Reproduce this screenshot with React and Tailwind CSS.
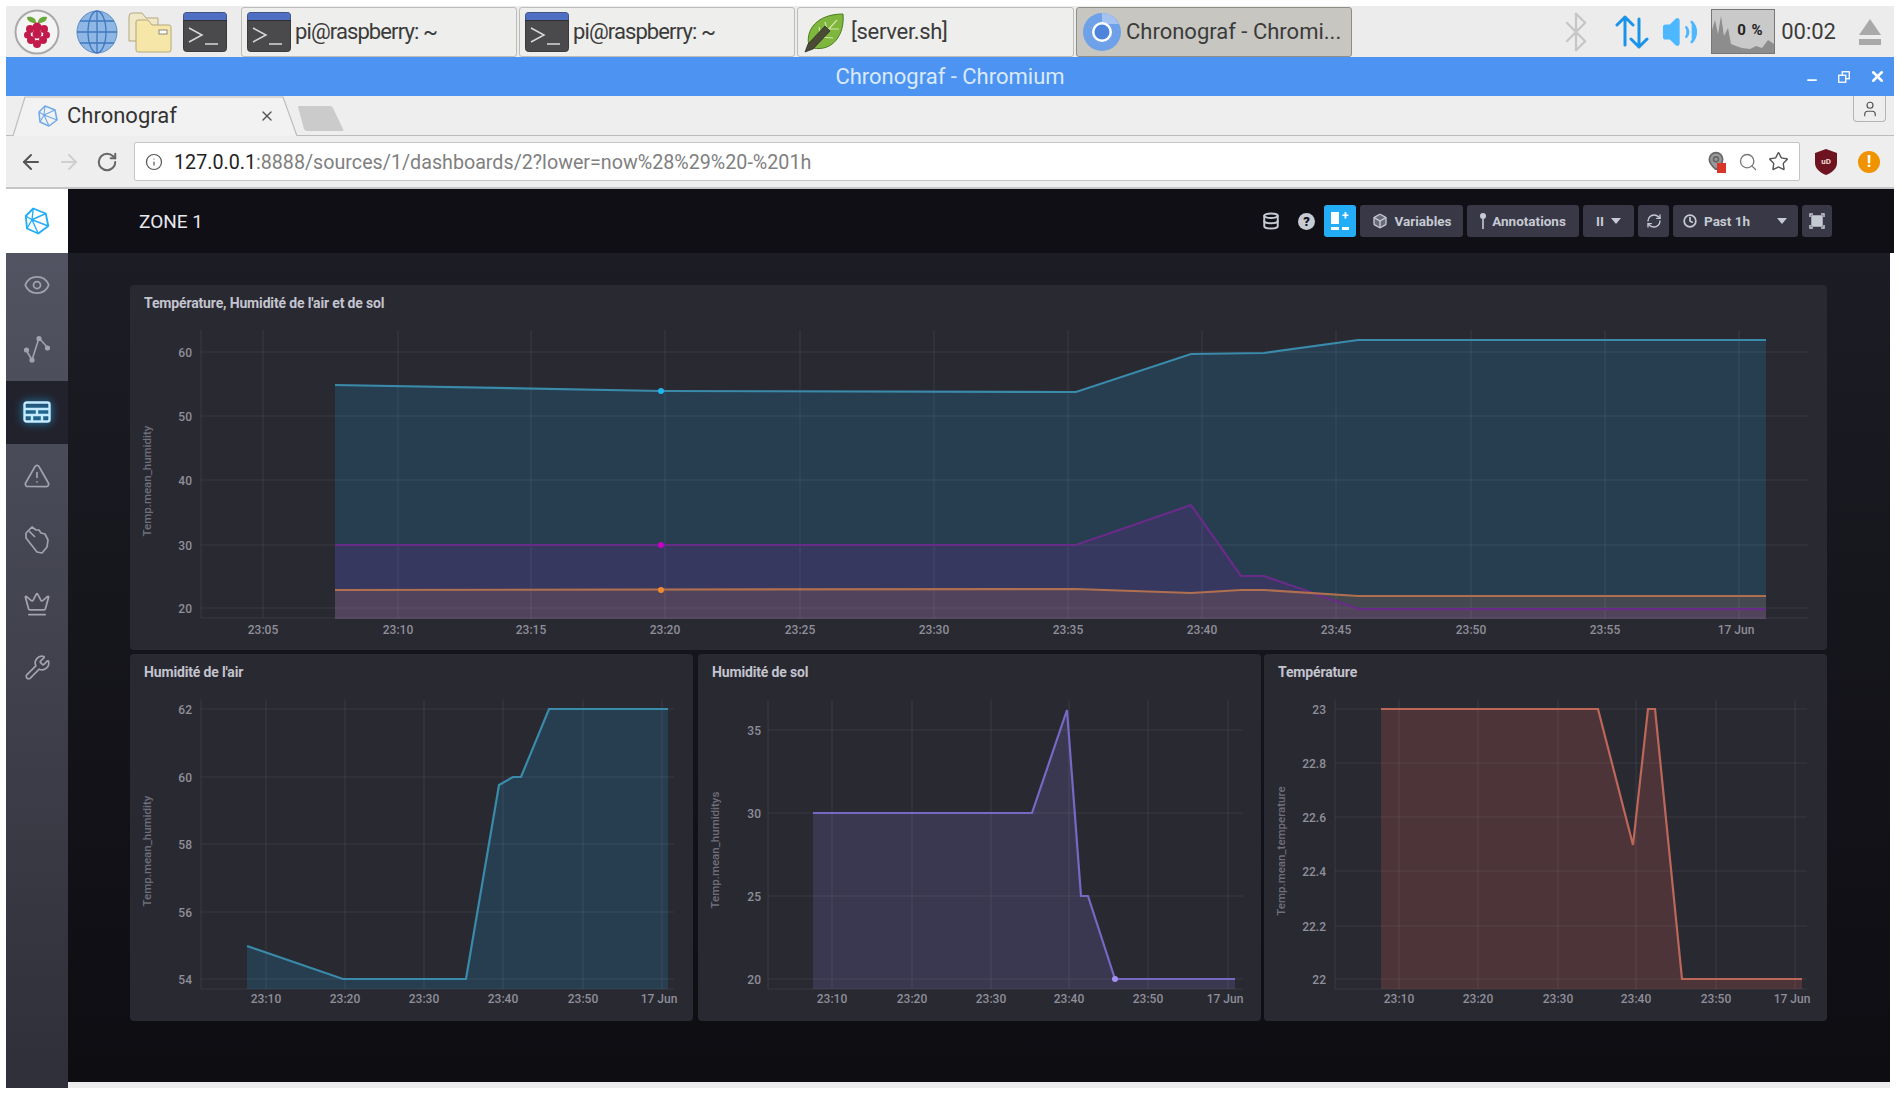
import React from 'react';
import { ArrowLeft, ArrowRight, RotateCw, Info, Search, Star, Eye, TriangleAlert, Crown, Wrench, Database, RefreshCw, Clock, Box, MapPin, User, X, Minus, Bluetooth, Volume2 } from 'lucide-react';

// chart data, all coordinates are page pixels
const blueLine = [[335, 385], [661, 391], [1076, 392], [1191, 354], [1264, 353], [1358, 340], [1766, 340]];
const purpleLine = [[335, 545], [1076, 545], [1191, 505], [1241, 576], [1264, 576], [1359, 609], [1766, 609]];
const orangeLine = [[335, 590], [1076, 589], [1191, 593], [1241, 590], [1264, 590], [1358, 596], [1766, 596]];

const charts = {
  all: {
    title: "Température, Humidité de l'air et de sol",
    box: [130, 285, 1697, 365],
    axis: { left: 201, right: 1808, top: 330, bottom: 618 },
    xTicks: [[263, '23:05'], [398, '23:10'], [531, '23:15'], [665, '23:20'], [800, '23:25'], [934, '23:30'], [1068, '23:35'], [1202, '23:40'], [1336, '23:45'], [1471, '23:50'], [1605, '23:55'], [1739, '17 Jun', 1736]],
    yTicks: [[352, '60'], [416, '50'], [480, '40'], [545, '30'], [608, '20']],
    yLabel: 'Temp.mean_humidity',
    yLabelPos: [147, 481],
    labelRight: 192,
    xLabelY: 630,
    floor: 619,
    series: [
      { points: blueLine, fill: '#22adf6', fillOpacity: 0.16, stroke: '#3a8aaa' },
      { points: purpleLine, fill: '#951eb3', fillOpacity: 0.15, stroke: '#682c88' },
      { points: orangeLine, fill: '#ee8351', fillOpacity: 0.15, stroke: '#b0704f' },
    ],
    dots: [[661, 391, '#1fb6ec'], [661, 545, '#c400c8'], [661, 590, '#f08a30']],
  },
  air: {
    title: "Humidité de l'air",
    box: [130, 654, 563, 367],
    axis: { left: 201, right: 674, top: 700, bottom: 989 },
    xTicks: [[266, '23:10'], [345, '23:20'], [424, '23:30'], [503, '23:40'], [583, '23:50'], [662, '17 Jun', 659]],
    yTicks: [[709, '62'], [777, '60'], [844, '58'], [912, '56'], [979, '54']],
    yLabel: 'Temp.mean_humidity',
    yLabelPos: [147, 851],
    labelRight: 192,
    xLabelY: 999,
    floor: 989,
    series: [{ points: [[247, 946], [343, 979], [466, 979], [499, 785], [513, 777], [521, 777], [549, 709], [668, 709]], fill: '#22adf6', fillOpacity: 0.16, stroke: '#3a8aaa' }],
    dots: [],
  },
  soil: {
    title: 'Humidité de sol',
    box: [698, 654, 563, 367],
    axis: { left: 768, right: 1243, top: 700, bottom: 989 },
    xTicks: [[832, '23:10'], [912, '23:20'], [991, '23:30'], [1069, '23:40'], [1148, '23:50'], [1228, '17 Jun', 1225]],
    yTicks: [[730, '35'], [813, '30'], [896, '25'], [979, '20']],
    yLabel: 'Temp.mean_humiditys',
    yLabelPos: [715, 850],
    labelRight: 761,
    xLabelY: 999,
    floor: 989,
    series: [{ points: [[813, 813], [1032, 813], [1067, 710], [1081, 896], [1088, 896], [1115, 979], [1235, 979]], fill: '#8e82e8', fillOpacity: 0.17, stroke: '#7768c4' }],
    dots: [[1115, 979, '#a48ff5']],
  },
  temp: {
    title: 'Température',
    box: [1264, 654, 563, 367],
    axis: { left: 1335, right: 1807, top: 700, bottom: 989 },
    xTicks: [[1399, '23:10'], [1478, '23:20'], [1558, '23:30'], [1636, '23:40'], [1716, '23:50'], [1795, '17 Jun', 1792]],
    yTicks: [[709, '23'], [763, '22.8'], [817, '22.6'], [871, '22.4'], [926, '22.2'], [979, '22']],
    yLabel: 'Temp.mean_temperature',
    yLabelPos: [1281, 851],
    labelRight: 1326,
    xLabelY: 999,
    floor: 989,
    series: [{ points: [[1381, 709], [1598, 709], [1633, 845], [1648, 709], [1655, 709], [1682, 979], [1802, 979]], fill: '#dd6555', fillOpacity: 0.2, stroke: '#bd675b' }],
    dots: [],
  },
};

const toPoints = (pts) => pts.map((p) => p.join(',')).join(' ');

function Chart({ data, className }) {
  const [x, y, w, h] = data.box;
  const { left, right, top, bottom } = data.axis;
  const titleH = 36;
  return (
    <section className={`rounded bg-[#292932] ${className}`}>
      <div className="h-[36px] pl-[14px] flex items-center text-[14px] font-bold tracking-[-0.15px] text-[#c3c4ce]">{data.title}</div>
      <svg width={w} height={h - titleH} viewBox={`${x} ${y + titleH} ${w} ${h - titleH}`} className="block">
        {data.series.map((s, i) => (
          <polygon key={i} points={`${s.points[0][0]},${data.floor} ${toPoints(s.points)} ${s.points[s.points.length - 1][0]},${data.floor}`} fill={s.fill} fillOpacity={s.fillOpacity} />
        ))}
        <g stroke="#ffffff" strokeOpacity="0.07" strokeWidth="1.2">
          {data.xTicks.map(([tx]) => <line key={tx} x1={tx} x2={tx} y1={top} y2={bottom} />)}
          {data.yTicks.map(([ty]) => <line key={ty} x1={left} x2={right} y1={ty} y2={ty} />)}
          <line x1={left} x2={left} y1={top} y2={bottom} />
          <line x1={left} x2={right} y1={bottom} y2={bottom} />
        </g>
        {data.series.map((s, i) => (
          <polyline key={i} points={toPoints(s.points)} fill="none" stroke={s.stroke} strokeWidth="2.2" />
        ))}
        {data.dots.map(([cx, cy, c]) => <circle key={c} cx={cx} cy={cy} r="3" fill={c} />)}
        <g fontFamily="Roboto, sans-serif" fontSize="12" fontWeight="500" fill="#8f8f99">
          {data.xTicks.map(([tx, label, lx = tx]) => <text key={tx} x={lx} y={data.xLabelY + 4} textAnchor="middle">{label}</text>)}
          {data.yTicks.map(([ty, label]) => <text key={ty} x={data.labelRight} y={ty + 5} textAnchor="end">{label}</text>)}
        </g>
        <text
          transform={`rotate(-90 ${data.yLabelPos[0]} ${data.yLabelPos[1]})`}
          x={data.yLabelPos[0]}
          y={data.yLabelPos[1] + 4}
          textAnchor="middle"
          fontFamily="Roboto, sans-serif"
          fontSize="11.5"
          fontWeight="500"
          fill="#6f6f7a"
        >
          {data.yLabel}
        </text>
      </svg>
    </section>
  );
}

function ChronografLogo({ size = 30, color = '#22adf6', className }) {
  return (
    <svg width={size} height={size} viewBox="0 0 24 24" fill="none" stroke={color} strokeWidth="1.5" strokeLinejoin="round" className={className}>
      <path d="M9 2 L19 6 L21 16 L13 22 L4 18 L3 8 Z" />
      <path d="M9 2 L8 11 L3 8 M8 11 L19 6 M8 11 L13 22 M8 11 L21 16 M4 18 L8 11" strokeWidth="1.1" />
    </svg>
  );
}

function Raspberry() {
  return (
    <svg width="46" height="46" viewBox="0 0 46 46">
      <circle cx="23" cy="23" r="21.5" fill="#f4f4f4" stroke="#a9a9a9" strokeWidth="2" />
      <path d="M22 14 C17 14 13 12 13 8 C18 7 22 9 22 14 Z" fill="#6aa83a" />
      <path d="M24 14 C29 14 33 12 33 8 C28 7 24 9 24 14 Z" fill="#6aa83a" />
      <g fill="#c21a4a">
        <circle cx="23" cy="18" r="4.5" />
        <circle cx="16" cy="20" r="4" />
        <circle cx="30" cy="20" r="4" />
        <circle cx="13.5" cy="26" r="3.5" />
        <circle cx="32.5" cy="26" r="3.5" />
        <circle cx="23" cy="25" r="4.5" />
        <circle cx="17" cy="31" r="4" />
        <circle cx="29" cy="31" r="4" />
        <circle cx="23" cy="35" r="4" />
      </g>
    </svg>
  );
}

function GlobeIcon() {
  return (
    <svg width="42" height="44" viewBox="0 0 42 44">
      <ellipse cx="21" cy="22" rx="20" ry="21" fill="#8fb7e6" stroke="#5c8dc8" />
      <g stroke="#3f78bd" strokeWidth="1.3" fill="none">
        <ellipse cx="21" cy="22" rx="9" ry="21" />
        <line x1="21" y1="1" x2="21" y2="43" />
        <line x1="1" y1="22" x2="41" y2="22" />
        <path d="M4 11 H38 M4 33 H38" />
      </g>
    </svg>
  );
}

function FolderIcon() {
  return (
    <svg width="44" height="42" viewBox="0 0 44 42">
      <path d="M1 6 Q1 2 4 2 H14 L18 7 H30 V30 H1 Z" fill="#f0e8c8" stroke="#b3a77a" />
      <path d="M8 11 Q8 9 10 9 H20 L24 14 H41 Q43 14 43 16 V39 Q43 41 41 41 H10 Q8 41 8 39 Z" fill="#f6e7a8" stroke="#b3a77a" />
      <rect x="31" y="19" width="8" height="4" fill="#fff" stroke="#8a8a7a" />
    </svg>
  );
}

function TerminalIcon({ size = 44 }) {
  return (
    <svg width={size} height={size - 4} viewBox="0 0 44 40" preserveAspectRatio="none">
      <rect x="0.5" y="0.5" width="43" height="39" rx="3" fill="#4a4a4c" stroke="#3a3a3c" />
      <path d="M0.5 8 V3.5 Q0.5 0.5 3.5 0.5 H40.5 Q43.5 0.5 43.5 3.5 V8 Z" fill="#4e6fc4" />
      <path d="M0.5 8 H43.5 V9 H0.5 Z" fill="#2e2e30" />
      <path d="M6 16 L19 23 L6 30" fill="none" stroke="#d8d8d8" strokeWidth="1.5" />
      <path d="M22 32 H35" stroke="#d8d8d8" strokeWidth="1.5" />
    </svg>
  );
}

function LeafpadIcon() {
  return (
    <svg width="44" height="44" viewBox="0 0 44 44">
      <path d="M6 36 C2 20 14 4 40 4 C42 24 30 42 10 38 Z" fill="#7fb63d" stroke="#4e7d1e" />
      <path d="M12 34 L34 10 M18 27 L16 17 M24 20 L22 12 M18 27 L30 28 M25 19 L36 19" stroke="#cfe6a4" strokeWidth="1.2" fill="none" />
      <path d="M2 42 L5 34 L22 16 L27 21 L10 39 Z" fill="#4b4b35" stroke="#222" strokeWidth="0.7" />
    </svg>
  );
}

function ChromiumIcon() {
  return (
    <svg width="40" height="40" viewBox="0 0 40 40">
      <circle cx="20" cy="20" r="19" fill="#6fa1e8" />
      <path d="M20 1 A19 19 0 0 1 37 12 H20 Z" fill="#a4c3f0" />
      <circle cx="20" cy="20" r="10" fill="#fff" />
      <circle cx="20" cy="20" r="7.5" fill="#4d84dc" />
    </svg>
  );
}

function NetworkIcon({ className }) {
  return (
    <svg width="34" height="36" viewBox="0 0 34 36" fill="none" stroke="#1a93e8" strokeWidth="3" strokeLinecap="round" strokeLinejoin="round" className={className}>
      <path d="M10 31 V3 M2 11 L10 3 L18 11" />
      <path d="M24 5 V33 M16 25 L24 33 L32 25" />
    </svg>
  );
}

function TaskButton({ icon, label, active, className, textClass = '' }) {
  return (
    <div className={`h-[50px] shrink-0 rounded-[3px] border flex items-center gap-[4px] pl-[5px] ${active ? 'border-[#8f8d86] bg-[#c8c6c1]' : 'border-[#bdbcb8] bg-[#eeeeec]'} ${className}`}>
      {icon}
      <span className={`text-[22px] leading-none text-[#3b3b3b] whitespace-nowrap ${textClass}`}>{label}</span>
    </div>
  );
}

function Taskbar() {
  return (
    <div className="h-[51px] bg-[#edecec] flex items-center">
      <div className="ml-[8px] w-[46px] flex justify-center"><Raspberry /></div>
      <div className="ml-[16px]"><GlobeIcon /></div>
      <div className="ml-[10px]"><FolderIcon /></div>
      <div className="ml-[11px]"><TerminalIcon /></div>
      <div className="ml-[14px] flex gap-[2px]">
        <TaskButton className="w-[276px]" textClass="tracking-[-0.9px]" icon={<TerminalIcon />} label="pi@raspberry: ~" />
        <TaskButton className="w-[276px]" textClass="tracking-[-0.9px]" icon={<TerminalIcon />} label="pi@raspberry: ~" />
        <TaskButton className="w-[277px]" textClass="tracking-[-0.3px]" icon={<LeafpadIcon />} label="[server.sh]" />
        <TaskButton active className="w-[276px]" icon={<ChromiumIcon />} label="Chronograf - Chromi..." />
      </div>
      <div className="flex-1" />
      <Bluetooth size={44} strokeWidth={1.2} className="text-[#c6c6c6] mr-[17px]" />
      <NetworkIcon className="mr-[12px]" />
      <Volume2 size={38} strokeWidth={1.6} className="text-[#4db8ff] fill-[#4db8ff] mr-[12px]" />
      <div className="relative w-[64px] h-[45px] border border-[#777] bg-[#c9c9c9]">
        <svg width="62" height="43" viewBox="0 0 62 43" className="absolute inset-0">
          <path d="M0 43 V20 L3 10 L6 24 L9 6 L12 26 L16 18 L19 34 L24 36 L30 38 L38 39 L44 36 L50 38 L56 30 L62 34 V43 Z" fill="#8d8d8d" />
        </svg>
        <span className="absolute left-[25px] top-[13px] text-[15px] tracking-[1px] leading-none font-bold text-[#222] whitespace-nowrap">0 %</span>
      </div>
      <span className="ml-[6px] text-[22px] leading-none text-[#3b3b3b]">00:02</span>
      <svg width="22" height="26" viewBox="0 0 22 26" className="ml-[23px] mr-[13px]">
        <path d="M11 0 L22 16 H0 Z M0 20 H22 V26 H0 Z" fill="#a9a9a9" />
      </svg>
    </div>
  );
}

function TitleBar() {
  return (
    <div className="relative h-[39px] bg-[#4d94f2] flex items-center justify-center">
      <span className="text-[22px] leading-none text-[#dbe9fc]">Chronograf - Chromium</span>
      <div className="absolute right-[8px] top-0 h-full flex items-center gap-[18px] text-white">
        <Minus size={14} strokeWidth={3} className="mt-[6px]" />
        <svg width="14" height="14" viewBox="0 0 16 16" fill="none" stroke="#fff" strokeWidth="1.5">
          <rect x="6" y="2" width="8" height="8" />
          <rect x="2" y="6" width="8" height="8" fill="#4d94f2" />
        </svg>
        <X size={17} strokeWidth={3.5} />
      </div>
    </div>
  );
}

function TabStrip() {
  return (
    <div className="relative h-[40px] bg-[#eeeeee] border-b border-[#bcbcbc] flex items-end">
      <div className="relative w-[292px] h-[39px] ml-[7px] shrink-0">
        <svg width="292" height="40" viewBox="0 0 292 40" className="absolute inset-0">
          <path d="M0 40 L12 1 H270 L284 40" fill="#f2f2f2" stroke="#bdbdbd" strokeWidth="1.2" />
          <rect x="1" y="39" width="282" height="2" fill="#f2f2f2" />
        </svg>
        <div className="relative h-full flex items-center pl-[23px]">
          <ChronografLogo size={24} color="#6fa8ea" />
          <span className="ml-[7px] text-[22px] leading-none text-[#333]">Chronograf</span>
          <X size={16} strokeWidth={2} className="ml-[82px] text-[#555]" />
        </div>
      </div>
      <svg width="48" height="26" viewBox="0 0 48 26" className="mb-[4px] -ml-[8px]">
        <path d="M1 2 Q1 1 2 1 H33 Q35 1 36 3 L46 24 Q47 26 45 26 H10 Q8 26 7 24 Z" fill="#cbcbcb" />
      </svg>
      <div className="absolute right-[8px] top-0 w-[33px] h-[26px] border border-t-0 border-[#b5b5b5] rounded-b-[4px] flex items-center justify-center">
        <User size={18} strokeWidth={1.6} className="text-[#555]" />
      </div>
    </div>
  );
}

function AddressBar() {
  return (
    <div className="h-[53px] bg-[#eeeeee] border-b-2 border-[#c5c5c5] flex items-center">
      <ArrowLeft size={24} strokeWidth={2} className="ml-[13px] text-[#555]" />
      <ArrowRight size={24} strokeWidth={2} className="ml-[14px] text-[#cfcfcf]" />
      <RotateCw size={22} strokeWidth={2.2} className="ml-[15px] text-[#666]" />
      <div className="ml-[16px] w-[1666px] h-[39px] bg-white border border-[#c4c4c4] rounded-[2px] flex items-center">
        <Info size={18} strokeWidth={1.6} className="ml-[10px] text-[#555]" />
        <span className="ml-[11px] mt-[2px] text-[19.7px] leading-none whitespace-nowrap">
          <span className="text-[#222]">127.0.0.1</span>
          <span className="text-[#808080]">:8888/sources/1/dashboards/2?lower=now%28%29%20-%201h</span>
        </span>
        <div className="flex-1" />
        <div className="relative mr-[12px] w-[20px] h-[22px]">
          <MapPin size={20} strokeWidth={2} className="text-[#666] fill-[#999]" />
          <span className="absolute right-0 bottom-0 w-[9px] h-[10px] bg-[#d9362b]" />
        </div>
        <Search size={20} strokeWidth={1.6} className="text-[#777] mr-[10px]" />
        <Star size={21} strokeWidth={1.6} className="text-[#555] mr-[10px]" />
      </div>
      <svg width="22" height="26" viewBox="0 0 22 26" className="ml-[15px]">
        <path d="M11 0 L22 4 V14 C22 20 16 24 11 26 C6 24 0 20 0 14 V4 Z" fill="#6d1420" />
        <text x="11" y="15" textAnchor="middle" fontSize="8" fontWeight="700" fill="#f3d9d9" fontFamily="Roboto, sans-serif">uD</text>
      </svg>
      <div className="ml-[21px] w-[22px] h-[22px] rounded-full bg-[#f09300] flex items-center justify-center text-white text-[17px] font-bold leading-none">!</div>
    </div>
  );
}

function GraphIcon() {
  return (
    <svg width="26" height="28" viewBox="0 0 26 28" fill="none" stroke="#a2a3ae" strokeWidth="1.6">
      <path d="M2 15 L8 25 L15 3 L24 13" />
      <circle cx="2.5" cy="15" r="1.8" fill="#a2a3ae" />
      <circle cx="8" cy="25" r="1.8" fill="#a2a3ae" />
      <circle cx="15" cy="3.5" r="1.8" fill="#a2a3ae" />
      <circle cx="23.5" cy="13" r="1.8" fill="#a2a3ae" />
    </svg>
  );
}

function DashIcon() {
  return (
    <svg width="28" height="22" viewBox="0 0 28 22" fill="none" stroke="#c4ebff" strokeWidth="2.4" className="drop-shadow-[0_0_4px_#22adf6]">
      <rect x="1.5" y="1.5" width="25" height="19" rx="2" />
      <path d="M1.5 8 H26.5 M14 8 V14 M1.5 14 H26.5 M9 14 V20 M19 14 V20" />
    </svg>
  );
}

function HandIcon() {
  return (
    <svg width="28" height="30" viewBox="0 0 28 30" fill="none" stroke="#a2a3ae" strokeWidth="1.7" strokeLinejoin="round">
      <path d="M3 8 L9 2 L13 5 L16 5 L18 8 L22 9 L25 15 L24 22 L19 28 L14 27 L3 13 Z" />
      <path d="M6 6 L12 12" />
    </svg>
  );
}

function Caret({ className }) {
  return (
    <svg width="10" height="6" viewBox="0 0 10 6" className={className}>
      <path d="M0 0 H10 L5 6 Z" fill="#c6cad3" />
    </svg>
  );
}

function Sidebar() {
  const cell = 'h-[63.8px] flex items-center justify-center';
  return (
    <div className="w-[62px] h-[899px] shrink-0 flex flex-col bg-gradient-to-b from-[#565766] to-[#2e2f38]">
      <div className="h-[64px] bg-white flex items-center justify-center shrink-0">
        <ChronografLogo size={30} />
      </div>
      <div className={cell}><Eye size={28} strokeWidth={1.5} className="text-[#a2a3ae]" /></div>
      <div className={cell}><GraphIcon /></div>
      <div className={`${cell} bg-[#22222c]`}><DashIcon /></div>
      <div className={cell}><TriangleAlert size={28} strokeWidth={1.5} className="text-[#a2a3ae]" /></div>
      <div className={cell}><HandIcon /></div>
      <div className={cell}><Crown size={28} strokeWidth={1.5} className="text-[#a2a3ae]" /></div>
      <div className={cell}><Wrench size={27} strokeWidth={1.5} className="text-[#a2a3ae]" /></div>
    </div>
  );
}

function HeadButton({ className, children }) {
  return (
    <div className={`h-[32px] rounded-[3px] bg-[#383846] text-[#c6cad3] text-[13.5px] font-bold flex items-center justify-center whitespace-nowrap ${className}`}>
      {children}
    </div>
  );
}

function DashHeader() {
  return (
    <div className="h-[64px] bg-[#0f0f15] flex items-center">
      <span className="ml-[71px] text-[19px] leading-none text-[#e8e8ee]">ZONE 1</span>
      <div className="flex-1" />
      <Database size={18} strokeWidth={2.6} className="text-[#c6cad3] mr-[18px]" />
      <div className="w-[17px] h-[17px] rounded-full bg-[#c6cad3] text-[#0f0f15] text-[13px] font-black leading-none flex items-center justify-center mr-[9px]">?</div>
      <div className="flex gap-[4px] mr-[62px]">
        <div className="h-[32px] w-[32px] rounded-[3px] bg-[#22adf6] grid grid-cols-2 gap-[3px] p-[7px]">
          <span className="bg-white" />
          <span className="text-white text-[12px] leading-[8px] font-bold text-center">+</span>
          <span className="bg-white" />
          <span className="bg-white" />
        </div>
        <HeadButton className="w-[103px] gap-[7px]"><Box size={16} strokeWidth={2} className="fill-[#6a6a78]" />Variables</HeadButton>
        <HeadButton className="w-[112px] gap-[6px]">
          <svg width="6" height="16" viewBox="0 0 6 16"><circle cx="3" cy="3" r="3" fill="#c6cad3" /><path d="M3 5 V16" stroke="#c6cad3" strokeWidth="1.6" /></svg>
          Annotations
        </HeadButton>
        <HeadButton className="w-[51px] gap-[7px]">II<Caret /></HeadButton>
        <HeadButton className="w-[31px]"><RefreshCw size={16} strokeWidth={2} /></HeadButton>
        <HeadButton className="w-[125px] justify-start pl-[10px]">
          <Clock size={14} strokeWidth={3} className="mr-[7px]" />Past 1h
          <Caret className="ml-[27px]" />
        </HeadButton>
        <HeadButton className="w-[30px]">
          <svg width="16" height="16" viewBox="0 0 16 16" fill="none" stroke="#c6cad3" strokeWidth="1.5">
            <rect x="3" y="3" width="10" height="10" fill="#c6cad3" />
            <path d="M1 4 V1 H4 M12 1 H15 V4 M15 12 V15 H12 M4 15 H1 V12" />
          </svg>
        </HeadButton>
      </div>
    </div>
  );
}

function App() {
  return (
    <div className="w-[1902px] h-[1096px] bg-white pt-[6px] pl-[6px] overflow-hidden font-['Roboto',sans-serif]">
      <div className="w-[1888px]">
        <Taskbar />
        <TitleBar />
        <TabStrip />
        <AddressBar />
        <div className="flex">
          <Sidebar />
          <div className="w-[1826px]">
            <DashHeader />
            <div className="w-[1822px] h-[829px] pl-[62px] pt-[32px] bg-gradient-to-b from-[#1c1c24] to-[#0d0d12]">
              <Chart data={charts.all} className="w-[1697px] h-[365px]" />
              <div className="mt-[4px] flex">
                <Chart data={charts.air} className="w-[563px] h-[367px] mr-[5px]" />
                <Chart data={charts.soil} className="w-[563px] h-[367px] mr-[3px]" />
                <Chart data={charts.temp} className="w-[563px] h-[367px]" />
              </div>
            </div>
            <div className="w-[1822px] h-[6px] bg-[#ececec]" />
          </div>
        </div>
      </div>
    </div>
  );
}

export default App;
